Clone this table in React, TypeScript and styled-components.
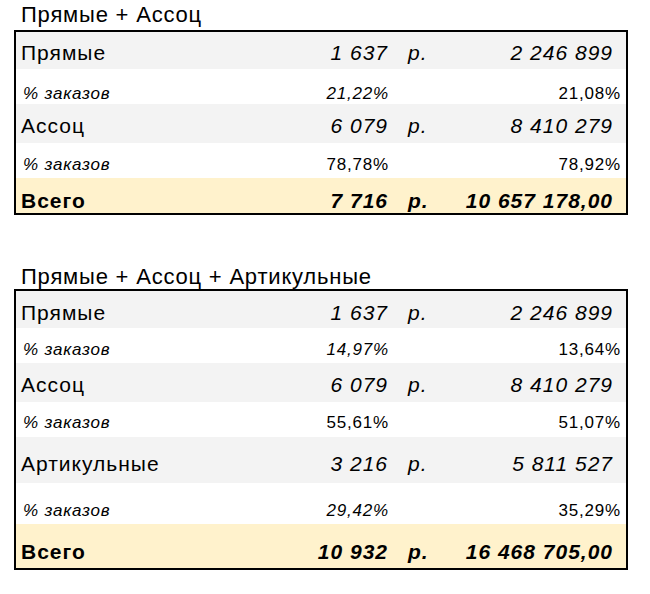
import React from "react";
import styled, { createGlobalStyle, css } from "styled-components";

const GlobalStyle = createGlobalStyle`
  html, body { margin: 0; padding: 0; background: #ffffff; }
  body { font-family: "Liberation Sans", Arial, Helvetica, sans-serif; color: #000; }
`;

type Kind = "main" | "pct" | "total";

interface RowData {
  kind: Kind;
  label: string;
  a: string;
  b: string;
  aItalic?: boolean;
  bItalic?: boolean;
  h: number;
  base: number; // distance from baseline to row bottom
}

const Page = styled.div`
  padding: 4px 0 0 14px;
  width: 614px;
`;

const Title = styled.div<{ $pb: number; $mt: number }>`
  font-size: 22px;
  line-height: 1;
  letter-spacing: 0.8px;
  padding: 0 0 ${(p) => p.$pb}px 7px;
  margin-top: ${(p) => p.$mt}px;
  white-space: nowrap;
`;

const Table = styled.div`
  border: 2px solid #000;
  display: flex;
  flex-direction: column;
`;

const tone: Record<Kind, string> = {
  main: "#f3f3f3",
  pct: "#ffffff",
  total: "#fff2cc",
};

const Row = styled.div<{ $kind: Kind; $h: number; $base: number }>`
  display: grid;
  grid-template-columns: 1fr 100px 60px 177px;
  align-items: end;
  box-sizing: border-box;
  height: ${(p) => p.$h}px;
  background: ${(p) => tone[p.$kind]};
  padding-bottom: ${(p) =>
    Math.max(0, p.$base - (p.$kind === "pct" ? 2.6 : 3.2))}px;
  line-height: 1;
  white-space: nowrap;
`;

const sizeFor = (k: Kind) =>
  k === "pct"
    ? css`
        font-size: 17px;
        letter-spacing: 0.8px;
      `
    : css`
        font-size: 21px;
        letter-spacing: 1px;
      `;

const Label = styled.div<{ $kind: Kind }>`
  ${(p) => sizeFor(p.$kind)}
  padding-left: ${(p) => (p.$kind === "pct" ? 7 : 5)}px;
  font-style: ${(p) => (p.$kind === "pct" ? "italic" : "normal")};
  font-weight: ${(p) => (p.$kind === "total" ? 700 : 400)};
`;

const Value = styled.div<{ $kind: Kind; $italic: boolean; $pad: number }>`
  ${(p) => sizeFor(p.$kind)}
  text-align: right;
  padding-right: ${(p) => p.$pad}px;
  font-style: ${(p) => (p.$italic ? "italic" : "normal")};
  font-weight: ${(p) => (p.$kind === "total" ? 700 : 400)};
`;

const Unit = styled.div<{ $kind: Kind }>`
  ${(p) => sizeFor(p.$kind)}
  padding-left: 19px;
  font-style: italic;
  font-weight: ${(p) => (p.$kind === "total" ? 700 : 400)};
`;

const table1: RowData[] = [
  { kind: "main", label: "Прямые", a: "1 637", b: "2 246 899", h: 37, base: 9.5 },
  { kind: "pct", label: "% заказов", a: "21,22%", b: "21,08%", aItalic: true, bItalic: false, h: 35, base: 5 },
  { kind: "main", label: "Ассоц", a: "6 079", b: "8 410 279", h: 39, base: 10 },
  { kind: "pct", label: "% заказов", a: "78,78%", b: "78,92%", aItalic: false, bItalic: false, h: 35, base: 8 },
  { kind: "total", label: "Всего", a: "7 716", b: "10 657 178,00", h: 35, base: 5 },
];

const table2: RowData[] = [
  { kind: "main", label: "Прямые", a: "1 637", b: "2 246 899", h: 37, base: 8.7 },
  { kind: "pct", label: "% заказов", a: "14,97%", b: "13,64%", aItalic: true, bItalic: false, h: 35, base: 8 },
  { kind: "main", label: "Ассоц", a: "6 079", b: "8 410 279", h: 39, base: 10 },
  { kind: "pct", label: "% заказов", a: "55,61%", b: "51,07%", aItalic: false, bItalic: false, h: 35, base: 9 },
  { kind: "main", label: "Артикульные", a: "3 216", b: "5 811 527", h: 46, base: 12 },
  { kind: "pct", label: "% заказов", a: "29,42%", b: "35,29%", aItalic: true, bItalic: false, h: 41, base: 8 },
  { kind: "total", label: "Всего", a: "10 932", b: "16 468 705,00", h: 44, base: 9 },
];

const SummaryTable: React.FC<{ rows: RowData[] }> = ({ rows }) => (
  <Table>
    {rows.map((r, i) => {
      const pct = r.kind === "pct";
      const aIt = pct ? !!r.aItalic : true;
      const bIt = pct ? !!r.bItalic : true;
      return (
        <Row key={i} $kind={r.kind} $h={r.h} $base={r.base}>
          <Label $kind={r.kind}>{r.label}</Label>
          <Value $kind={r.kind} $italic={aIt} $pad={pct ? 0 : 1}>
            {r.a}
          </Value>
          <Unit $kind={r.kind}>{pct ? "" : "р."}</Unit>
          <Value $kind={r.kind} $italic={bIt} $pad={pct ? 5 : 13}>
            {r.b}
          </Value>
        </Row>
      );
    })}
  </Table>
);

export default function App() {
  return (
    <>
      <GlobalStyle />
      <Page>
        <Title $pb={4} $mt={0}>Прямые + Ассоц</Title>
        <SummaryTable rows={table1} />
        <Title $pb={1} $mt={51}>Прямые + Ассоц + Артикульные</Title>
        <SummaryTable rows={table2} />
      </Page>
    </>
  );
}
